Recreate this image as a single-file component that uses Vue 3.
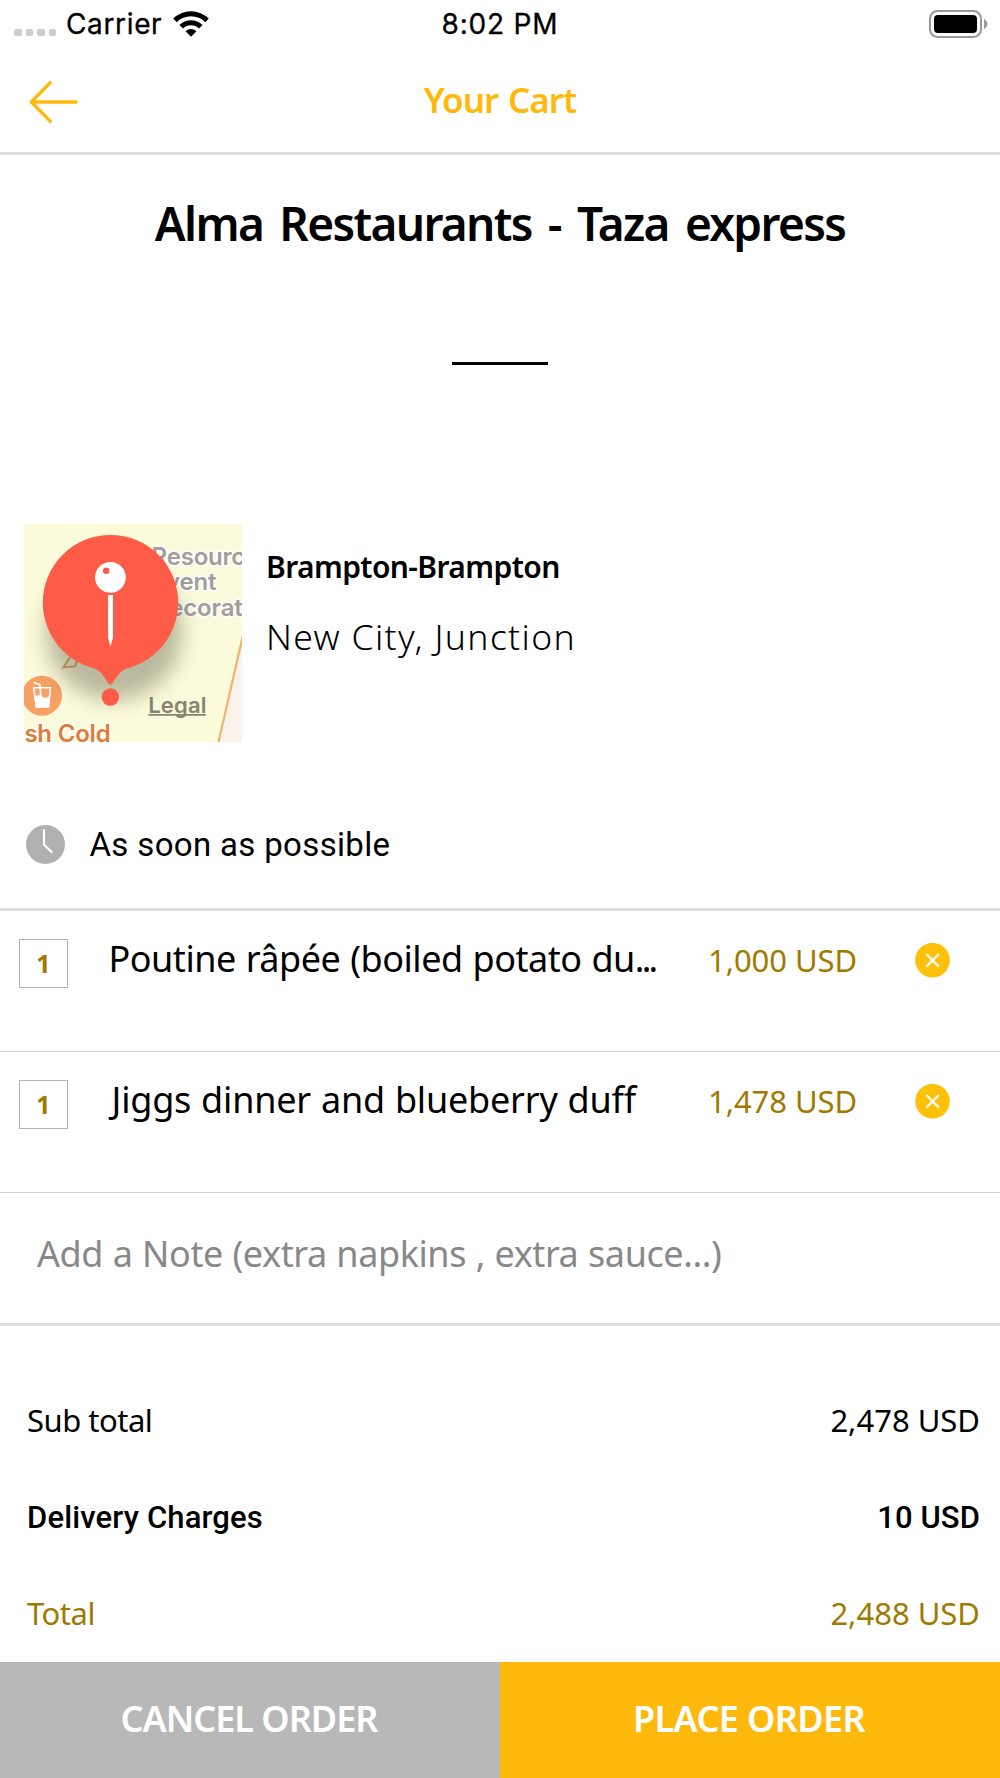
<script setup>
const items = [
  { qty: 1, name: 'Poutine râpée (boiled potato du', clipped: true, price: '1,000 USD' },
  { qty: 1, name: 'Jiggs dinner and blueberry duff', clipped: false, price: '1,478 USD' },
]
const totals = [
  { label: 'Sub total', value: '2,478 USD', kind: 'plain' },
  { label: 'Delivery Charges', value: '10 USD', kind: 'strong' },
  { label: 'Total', value: '2,488 USD', kind: 'gold' },
]
</script>

<template>
  <div class="screen">
    <div class="status">
      <div class="status-left">
        <span class="dots"><i v-for="n in 4" :key="n"></i></span>
        <span class="carrier">Carrier</span>
        <svg class="wifi" width="38" height="28" viewBox="0 0 38 28">
          <path d="M1.2 8.6A25.5 25.5 0 0 1 36.8 8.6L33.3 12.2A20.4 20.4 0 0 0 4.7 12.2Z" />
          <path d="M7.4 14.9A16.6 16.6 0 0 1 30.6 14.9L27 18.5A11.4 11.4 0 0 0 11 18.5Z" />
          <path d="M13.6 21.2A7.8 7.8 0 0 1 24.4 21.2L19 26.8Z" />
        </svg>
      </div>
      <span class="time">8:02 PM</span>
      <div class="status-right">
        <svg width="53" height="28" viewBox="0 0 53 28">
          <rect x="1" y="1" width="51" height="26" rx="7.5" class="shell" />
          <rect x="5" y="5" width="43" height="18" rx="4" />
        </svg>
        <svg class="nub" width="4" height="10" viewBox="0 0 4 10"><path d="M0 0Q3.4 1.8 3.4 5T0 10Z" /></svg>
      </div>
    </div>

    <header class="bar">
      <svg class="back" width="50" height="44" viewBox="0 0 50 44">
        <path d="M48.3 22H3M22.3 1.7L2.3 22L22.3 42.3" />
      </svg>
      <h1>Your Cart</h1>
    </header>

    <section class="store">
      <h2>Alma Restaurants - Taza express</h2>
      <div class="rule"></div>
    </section>

    <section class="address">
      <svg class="map" width="218" height="218" viewBox="0 0 218 218">
        <defs>
          <filter id="soft" x="-30%" y="-30%" width="160%" height="160%">
            <feGaussianBlur stdDeviation="10" />
          </filter>
        </defs>
        <rect width="218" height="218" fill="#fbfadb" />
        <path d="M218.5 112L194.3 218H218.5Z" fill="#f9f3ec" />
        <path d="M218.8 112L194.3 219" fill="none" stroke="#f3b36e" stroke-width="2.2" />
        <path d="M47.5 131L39.5 143.3L51 142.4L54.5 133" fill="none" stroke="#e3a364" stroke-width="2" />
        <g class="place grey">
          <text x="127.5" y="41">Resourc</text>
          <text x="192.3" y="66" text-anchor="end">Event</text>
          <text x="218.5" y="92" text-anchor="end">Decorat</text>
        </g>
        <circle cx="18" cy="171.7" r="20" fill="#f7a264" />
        <path d="M9.7 163.8H26.4L24.6 183H12.2Z" fill="none" stroke="#fff" stroke-width="1.6" />
        <path d="M10.6 172.6Q14 170 18 172.4T25.6 172.6L24.6 183.4H12.2Z" fill="#fff" />
        <path d="M9.7 158.5L16 161L17 174" fill="none" stroke="#fff" stroke-width="1.8" />
        <text class="place orange" x="0.4" y="217.7">sh Cold</text>
        <circle cx="90" cy="108" r="68" fill="#3c3c28" opacity="0.34" filter="url(#soft)" />
        <text class="legal" x="124.2" y="188.7">Legal</text>
        <path d="M124.3 190.8H181.8" stroke="#85856f" stroke-width="1.8" />
        <g fill="#ff5c48">
          <circle cx="86.5" cy="78.6" r="67.7" />
          <path d="M68 143.8C77.5 146 80.5 154.5 84 159Q86.4 162.4 88.8 159C92.3 154.5 95.3 146 105 143.8Z" />
          <circle cx="86.4" cy="173" r="8.7" />
        </g>
        <circle cx="86.4" cy="53.3" r="15.4" fill="#fff" />
        <circle cx="82.2" cy="46.8" r="3.2" fill="#ff5c48" />
        <path d="M84 71H89V113.5L86.5 122.6L84 113.5Z" fill="#fff" />
      </svg>
      <div class="where">
        <strong>Brampton-Brampton</strong>
        <span>New City, Junction</span>
      </div>
    </section>

    <section class="when">
      <svg width="39" height="39" viewBox="0 0 39 39">
        <circle cx="19.5" cy="19.5" r="19.5" fill="#b0b0b0" />
        <path d="M18 5V19.7L25.7 27" />
      </svg>
      <span>As soon as possible</span>
    </section>

    <ul class="items">
      <li v-for="item in items" :key="item.name">
        <span class="qty">{{ item.qty }}</span>
        <span class="name" :class="{ clipped: item.clipped }">{{ item.name }}<i v-if="item.clipped">...</i></span>
        <span class="price">{{ item.price }}</span>
        <svg class="remove" width="35" height="35" viewBox="0 0 35 35">
          <circle cx="17.5" cy="17.2" r="17.3" fill="#ffc107" />
          <path d="M11.3 11L23.9 23.6M23.9 11L11.3 23.6" />
        </svg>
      </li>
    </ul>

    <div class="note">Add a Note (extra napkins , extra sauce...)</div>

    <dl class="totals">
      <div v-for="row in totals" :key="row.label" :class="row.kind">
        <dt>{{ row.label }}</dt>
        <dd>{{ row.value }}</dd>
      </div>
    </dl>

    <footer>
      <button class="cancel">CANCEL ORDER</button>
      <button class="confirm">PLACE ORDER</button>
    </footer>
  </div>
</template>

<style>
body { margin: 0; background: #fff; }
</style>

<style scoped>
.screen {
  width: 1000px;
  height: 1778px;
  display: flex;
  flex-direction: column;
  overflow: hidden;
  background: #fff;
  color: #000;
  font-family: "Noto Sans", sans-serif;
}
h1, h2, ul, dl, dd { margin: 0; padding: 0; }

.status {
  height: 48px;
  display: grid;
  grid-template-columns: 1fr auto 1fr;
  align-items: center;
  font: 400 28px "Inter", sans-serif;
}
.status-left { display: flex; align-items: center; padding-left: 14px; }
.dots { display: flex; gap: 4px; margin-top: 17px; }
.dots i { width: 7.6px; height: 7px; border-radius: 2px; background: #ccc; }
.carrier { margin-left: 9.6px; letter-spacing: 0.65px; -webkit-text-stroke: 0.3px #000; }
.wifi { margin-left: 10px; }
.time { letter-spacing: 0.8px; -webkit-text-stroke: 0.3px #000; }
.status-right { display: flex; align-items: center; justify-content: flex-end; padding-right: 12px; }
.shell { fill: none; stroke: #999; stroke-width: 2; }
.nub { margin-left: 2.5px; fill: #999; }

.bar {
  height: 104px;
  flex: none;
  display: grid;
  grid-template-columns: 1fr auto 1fr;
  align-items: center;
  border-bottom: 3px solid #dedede;
}
.bar h1 { font-size: 35px; font-weight: 600; line-height: 48px; letter-spacing: -0.95px; word-spacing: 1.5px; color: #ffb90d; }
.back { margin: 3px 0 0 29px; fill: none; stroke: #ffb90d; stroke-width: 3.3; }

.store { padding-top: 38px; display: flex; flex-direction: column; align-items: center; }
.store h2 { font-size: 46px; font-weight: 600; line-height: 60px; letter-spacing: -1.65px; word-spacing: 5.7px; }
.rule { width: 96px; height: 2.7px; margin-top: 109px; background: #000; }

.address { margin-top: 159.3px; display: flex; padding-left: 24px; }
.map { flex: none; display: block; }
.place { font: 600 24px "Inter", sans-serif; paint-order: stroke; stroke: #fff; stroke-width: 3px; stroke-linejoin: round; letter-spacing: -0.2px; }
.grey { fill: #a29e9a; }
.orange { fill: #df7c3a; }
.legal { font: 600 22px "Inter", sans-serif; letter-spacing: 0.2px; fill: #85856f; }
.where { display: flex; flex-direction: column; padding: 23px 0 0 24px; }
.where strong { font-size: 30px; font-weight: 600; line-height: 40px; letter-spacing: -0.6px; }
.where span { margin-top: 26px; font-size: 35.5px; font-weight: 300; line-height: 46px; letter-spacing: 1.35px; }

.when {
  height: 61px;
  margin-top: 72px;
  padding: 0 0 33px 25.5px;
  display: flex;
  align-items: center;
  border-bottom: 3px solid #dedede;
}
.when path { fill: none; stroke: #fff; stroke-width: 2.2; stroke-linecap: round; stroke-linejoin: round; }
.when span { margin: 2px 0 0 25px; font: 400 33px/40px Roboto, sans-serif; letter-spacing: 0.34px; }

.items { list-style: none; }
.items li {
  height: 140px;
  display: flex;
  align-items: flex-start;
  padding: 0 50px 0 19px;
  border-bottom: 1px solid #d0d0d0;
}
.qty {
  box-sizing: border-box;
  width: 49px;
  height: 49px;
  margin-top: 28px;
  border: 1.4px solid #b4b4b4;
  text-align: center;
  font-size: 25px;
  font-weight: 700;
  line-height: 46px;
  color: #a07a00;
}
.name { flex: 1; margin-top: 24px; padding-left: 43.5px; font-size: 36px; line-height: 48px; letter-spacing: -0.2px; word-spacing: 0.8px; white-space: nowrap; }
.clipped { padding-left: 40.5px; letter-spacing: -0.48px; word-spacing: 1px; }
.clipped i { font-style: normal; letter-spacing: -2.8px; }
.price { width: 207px; margin-top: 27.6px; font-size: 31px; line-height: 42px; letter-spacing: -0.05px; color: #a07a00; }
.remove { flex: none; margin-top: 32px; }
.remove path { stroke: #fff; stroke-width: 2.2; }

.note {
  height: 92.5px;
  padding: 37.5px 0 0 37px;
  border-bottom: 3px solid #dedede;
  font-size: 36px;
  line-height: 48px;
  letter-spacing: -0.42px;
  word-spacing: 0.7px;
  color: #888;
}

.totals { padding: 45.5px 20px 0 27px; font-size: 31px; }
.totals div { box-sizing: border-box; height: 96.5px; display: flex; justify-content: space-between; align-items: center; }
.totals dt { letter-spacing: -0.5px; }
.totals .strong { padding-top: 2px; font: 500 31px Roboto, sans-serif; letter-spacing: 0.1px; }
.totals .strong dt { letter-spacing: 0.15px; }
.totals .gold { color: #a07a00; }

footer { margin-top: auto; height: 116px; flex: none; display: flex; }
button {
  flex: 1;
  border: 0;
  padding: 0 2px 4px 0;
  color: #fff;
  font: 600 36px "Noto Sans", sans-serif;
}
.cancel { background: #b8b8b8; letter-spacing: -1px; }
.confirm { background: #ffb90d; letter-spacing: -0.6px; }
</style>
